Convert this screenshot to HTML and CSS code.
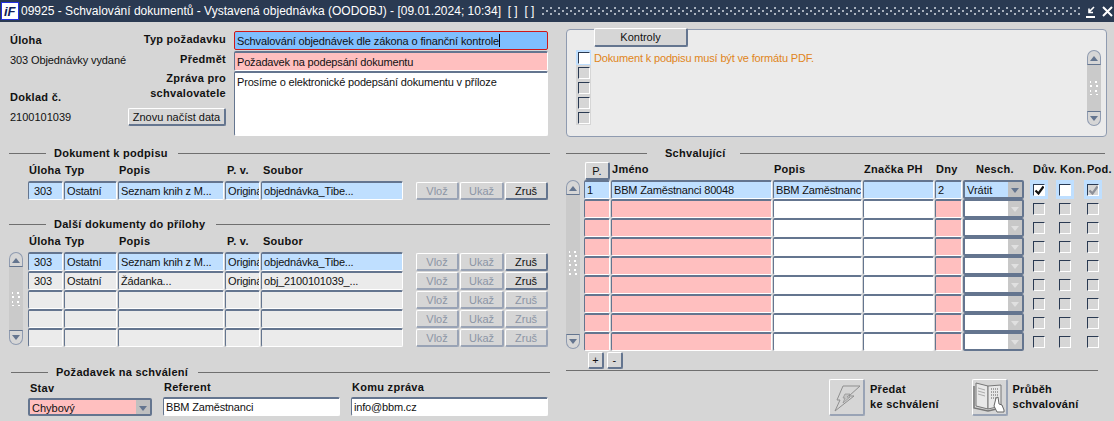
FILE: index.html
```html
<!DOCTYPE html>
<html lang="cs">
<head>
<meta charset="utf-8">
<title>Schvalování dokumentů</title>
<link rel="stylesheet" href="styles.css">
</head>
<body>
<header class="titlebar">
  <svg class="logo" width="18" height="18" viewBox="0 0 18 18"><rect x="0.5" y="0.5" width="17" height="17" fill="#fff" stroke="#2430e0"/><text class="logo-text" x="3" y="14">iF</text></svg>
  <span class="title-text">09925 - Schvalování dokumentů - Vystavená objednávka (OODOBJ) - [09.01.2024; 10:34]&nbsp; [ ]&nbsp; [ ]</span>
  <span class="dots"></span>
  <svg class="winbtn" width="27" height="18" viewBox="0 0 27 18"><path d="M0 15h9" stroke="#fff" stroke-width="2"/><path d="M8 5l-5 5M3 6.500v4h4" stroke="#fff" stroke-width="1.600" fill="none"/><path d="M17 5l9 9M26 5l-9 9" stroke="#fff" stroke-width="2"/></svg>
</header>
<main class="window">
  <section class="left">
    <div class="head">
      <div class="info">
        <div class="b info-task">Úloha</div>
        <div class="info-val">303 Objednávky vydané</div>
        <div class="b info-doc">Doklad č.</div>
        <div class="info-val2">2100101039</div>
      </div>
      <div class="labels">
        <div class="b lab">Typ požadavku</div>
        <div class="b lab">Předmět</div>
        <div class="b lab lab2">Zpráva pro<br>schvalovatele</div>
        <button class="btn reload">Znovu načíst data</button>
      </div>
      <div class="fields">
        <div class="f focus">Schvalování objednávek dle zákona o finanční kontrole<i class="caret"></i></div>
        <div class="f pink">Požadavek na podepsání dokumentu</div>
        <div class="f white area">Prosíme o elektronické podepsání dokumentu v příloze</div>
      </div>
    </div>

    <div class="sect s1"><i class="rule first"></i><span class="b">Dokument k podpisu</span><i class="rule"></i></div>
    <div class="cols"><span class="b">Úloha</span><span class="b">Typ</span><span class="b">Popis</span><span class="b">P. v.</span><span class="b">Soubor</span></div>
    <div class="docrow">
      <div class="f blue c">303</div><div class="f blue">Ostatní</div><div class="f blue">Seznam knih z M...</div><div class="f blue">Originál</div><div class="f blue">objednávka_Tibe...</div>
      <div class="acts"><button class="btn off">Vlož</button><button class="btn off">Ukaž</button><button class="btn">Zruš</button></div>
    </div>

    <div class="sect s2"><i class="rule first"></i><span class="b">Další dokumenty do přílohy</span><i class="rule"></i></div>
    <div class="cols"><span class="b">Úloha</span><span class="b">Typ</span><span class="b">Popis</span><span class="b">P. v.</span><span class="b">Soubor</span></div>
    <div class="tablewrap">
      <div class="scroll short"><b class="up"></b><b class="track"><i class="grip"></i></b><b class="down"></b></div>
      <div class="rows">
        <div class="docrow">
          <div class="f blue c">303</div><div class="f blue">Ostatní</div><div class="f blue">Seznam knih z M...</div><div class="f blue">Originál</div><div class="f blue">objednávka_Tibe...</div>
          <div class="acts"><button class="btn off">Vlož</button><button class="btn off">Ukaž</button><button class="btn">Zruš</button></div>
        </div>
        <div class="docrow">
          <div class="f grey c">303</div><div class="f grey">Ostatní</div><div class="f grey">Žádanka...</div><div class="f grey">Originál</div><div class="f grey">obj_2100101039_...</div>
          <div class="acts"><button class="btn off">Vlož</button><button class="btn off">Ukaž</button><button class="btn">Zruš</button></div>
        </div>
        <div class="docrow">
          <div class="f grey"></div><div class="f grey"></div><div class="f grey"></div><div class="f grey"></div><div class="f grey"></div>
          <div class="acts"><button class="btn off">Vlož</button><button class="btn off">Ukaž</button><button class="btn off">Zruš</button></div>
        </div>
        <div class="docrow">
          <div class="f grey"></div><div class="f grey"></div><div class="f grey"></div><div class="f grey"></div><div class="f grey"></div>
          <div class="acts"><button class="btn off">Vlož</button><button class="btn off">Ukaž</button><button class="btn off">Zruš</button></div>
        </div>
        <div class="docrow">
          <div class="f grey"></div><div class="f grey"></div><div class="f grey"></div><div class="f grey"></div><div class="f grey"></div>
          <div class="acts"><button class="btn off">Vlož</button><button class="btn off">Ukaž</button><button class="btn off">Zruš</button></div>
        </div>
      </div>
    </div>

    <div class="sect s3"><i class="rule first"></i><span class="b">Požadavek na schválení</span><i class="rule"></i></div>
    <div class="request">
      <div class="rq-col stav"><span class="b">Stav</span><div class="sel pink"><span>Chybový</span><b class="arrow"></b></div></div>
      <div class="rq-col ref"><span class="b">Referent</span><div class="f white">BBM Zaměstnanci</div></div>
      <div class="rq-col mail"><span class="b">Komu zpráva</span><div class="f white">info@bbm.cz</div></div>
    </div>
  </section>

  <section class="right">
    <div class="panel">
      <button class="tab">Kontroly</button>
      <div class="checks">
        <div class="chk-cell active"><i class="chk on"></i></div>
        <div class="chk-cell"><i class="chk"></i></div>
        <div class="chk-cell"><i class="chk"></i></div>
        <div class="chk-cell"><i class="chk"></i></div>
        <div class="chk-cell"><i class="chk"></i></div>
      </div>
      <div class="warn">Dokument k podpisu musí být ve formátu PDF.</div>
      <div class="scroll pscroll"><b class="up"></b><b class="track"><i class="grip"></i></b><b class="down"></b></div>
    </div>

    <div class="sect r1"><i class="rule rfirst"></i><span class="b">Schvalující</span><i class="rule"></i></div>
    <div class="apphead">
      <button class="btn pbtn b">P.</button>
      <span class="b">Jméno</span><span class="b">Popis</span><span class="b">Značka PH</span><span class="b">Dny</span><span class="b nes">Nesch.</span><span class="b">Dův.</span><span class="b">Kon.</span><span class="b">Pod.</span>
    </div>
    <div class="tablewrap apptable">
      <div class="scroll tall"><b class="up"></b><b class="track"><i class="grip long"></i></b><b class="down"></b></div>
      <div class="rows">
        <div class="approw">
          <div class="f blue">1</div><div class="f blue">BBM Zaměstnanci 80048</div><div class="f blue">BBM Zaměstnanc</div><div class="f blue"></div><div class="f blue">2</div>
          <div class="sel blue"><span>Vrátit</span><b class="arrow"></b></div>
          <div class="chk-cell active"><i class="chk checked"><svg width="11" height="11" viewBox="0 0 11 11"><path d="M1.500 5.500l3 3 5-7" stroke="#111" stroke-width="2.200" fill="none"/></svg></i></div>
          <div class="chk-cell active"><i class="chk on"></i></div>
          <div class="chk-cell active"><i class="chk"><svg width="11" height="11" viewBox="0 0 11 11"><path d="M1.500 5.500l3 3 5-7" stroke="#8d9098" stroke-width="2.200" fill="none"/></svg></i></div>
        </div>
        <div class="approw"><div class="f pink"></div><div class="f pink"></div><div class="f white"></div><div class="f white"></div><div class="f pink"></div><div class="sel white"><span></span><b class="arrow dim"></b></div><div class="chk-cell"><i class="chk"></i></div><div class="chk-cell"><i class="chk"></i></div><div class="chk-cell"><i class="chk"></i></div></div>
        <div class="approw"><div class="f pink"></div><div class="f pink"></div><div class="f white"></div><div class="f white"></div><div class="f pink"></div><div class="sel white"><span></span><b class="arrow dim"></b></div><div class="chk-cell"><i class="chk"></i></div><div class="chk-cell"><i class="chk"></i></div><div class="chk-cell"><i class="chk"></i></div></div>
        <div class="approw"><div class="f pink"></div><div class="f pink"></div><div class="f white"></div><div class="f white"></div><div class="f pink"></div><div class="sel white"><span></span><b class="arrow dim"></b></div><div class="chk-cell"><i class="chk"></i></div><div class="chk-cell"><i class="chk"></i></div><div class="chk-cell"><i class="chk"></i></div></div>
        <div class="approw"><div class="f pink"></div><div class="f pink"></div><div class="f white"></div><div class="f white"></div><div class="f pink"></div><div class="sel white"><span></span><b class="arrow dim"></b></div><div class="chk-cell"><i class="chk"></i></div><div class="chk-cell"><i class="chk"></i></div><div class="chk-cell"><i class="chk"></i></div></div>
        <div class="approw"><div class="f pink"></div><div class="f pink"></div><div class="f white"></div><div class="f white"></div><div class="f pink"></div><div class="sel white"><span></span><b class="arrow dim"></b></div><div class="chk-cell"><i class="chk"></i></div><div class="chk-cell"><i class="chk"></i></div><div class="chk-cell"><i class="chk"></i></div></div>
        <div class="approw"><div class="f pink"></div><div class="f pink"></div><div class="f white"></div><div class="f white"></div><div class="f pink"></div><div class="sel white"><span></span><b class="arrow dim"></b></div><div class="chk-cell"><i class="chk"></i></div><div class="chk-cell"><i class="chk"></i></div><div class="chk-cell"><i class="chk"></i></div></div>
        <div class="approw"><div class="f pink"></div><div class="f pink"></div><div class="f white"></div><div class="f white"></div><div class="f pink"></div><div class="sel white"><span></span><b class="arrow dim"></b></div><div class="chk-cell"><i class="chk"></i></div><div class="chk-cell"><i class="chk"></i></div><div class="chk-cell"><i class="chk"></i></div></div>
        <div class="approw"><div class="f pink"></div><div class="f pink"></div><div class="f white"></div><div class="f white"></div><div class="f pink"></div><div class="sel white"><span></span><b class="arrow dim"></b></div><div class="chk-cell"><i class="chk"></i></div><div class="chk-cell"><i class="chk"></i></div><div class="chk-cell"><i class="chk"></i></div></div>
      </div>
    </div>
    <div class="plusminus"><button class="btn pm b">+</button><button class="btn pm b">-</button></div>
    <i class="rule bottomrule"></i>
    <div class="actions">
      <button class="iconbtn"><svg width="33" height="34" viewBox="0 0 33 34"><path d="M13 6h17L19 16h5L5 31l5-11H7z" fill="none" stroke="#8f8f8f"/><path d="M15 14h5l-3 3h3l-7 6 2-5h-2z" fill="#c4c4c4" stroke="#8f8f8f" stroke-width=".7"/></svg></button>
      <div class="b actlabel">Předat<br>ke schválení</div>
      <button class="iconbtn"><svg width="33" height="34" viewBox="0 0 33 34"><path d="M3 3l12 3v23L3 26z" fill="#e8e8e8" stroke="#777"/><path d="M15 6l13-1v21l-13 3z" fill="#e8e8e8" stroke="#777"/><path d="M1 6v22l14 3 13-3" fill="none" stroke="#777" stroke-width="1.500"/><path d="M18 9h8M18 12h8M18 15h8M18 18h6" stroke="#a0a0a0" stroke-width="2" stroke-dasharray="1 1"/><path d="M5 8l7 2M5 11l7 2M5 14l7 2" stroke="#aaa"/><path d="M23 18l2-1 1 7 3 1 2 5v2h-7l-3-6z" fill="#fff" stroke="#666"/></svg></button>
      <div class="b actlabel">Průběh<br>schvalování</div>
    </div>
  </section>
</main>
</body>
</html>
```
FILE: styles.css
```css
* { box-sizing: border-box; }
html, body { margin: 0; height: 100%; }
body {
  width: 1114px;
  height: 421px;
  overflow: hidden;
  background: #d6d6d6;
  color: #111;
  font: 11px/14px "Liberation Sans", Arial, sans-serif;
}
i, b { display: block; font-style: normal; }
span.b, .b { font-weight: 700; letter-spacing: .28px; }

.titlebar {
  height: 22px;
  display: flex;
  align-items: center;
  background: #2a3a52;
  color: #fff;
  padding-left: 1px;
  font-size: 12px;
}
.logo { flex: none; margin-right: 2px; }
.logo-text { font: italic 700 13px "Liberation Sans", sans-serif; fill: #10205a; }
.title-text { white-space: nowrap; letter-spacing: .01px; }
.dots {
  flex: 1;
  height: 10px;
  margin: 0 4px 0 8px;
  background-image:
    radial-gradient(circle at 1px 1px, #aeb6c2 .7px, transparent .9px),
    radial-gradient(circle at 1px 1px, #aeb6c2 .7px, transparent .9px);
  background-size: 8px 6px, 8px 6px;
  background-position: 0 1px, 4px 4px;
}
.winbtn { flex: none; margin-right: 1px; }

.window { display: grid; grid-template-columns: 557px 557px; }

.left { padding: 9px 0 0 9px; }
.right { padding: 5px 0 0 9px; }

/* top form */
.head { display: flex; height: 110px; }
.info { width: 119px; padding-left: 1px; white-space: nowrap; }
.info-task { margin-top: 2px; }
.info-val { margin-top: 6px; letter-spacing: -.1px; }
.info-doc { margin-top: 23px; }
.info-val2 { margin-top: 6px; }
.labels { width: 98px; display: flex; flex-direction: column; align-items: flex-end; }
.lab { text-align: right; height: 20px; padding-top: 1px; }
.lab2 { height: 37px; line-height: 15px; margin-top: 0; padding-top: 0; }
.reload { width: 98px; height: 18px; }
.fields { width: 314px; margin-left: 8px; display: flex; flex-direction: column; }
.fields .f { width: 314px; height: 20px; }
.fields .area { height: 65px; padding-top: 2px; align-items: flex-start; }

/* fields */
.f {
  height: 19px;
  min-width: 0;
  display: flex;
  align-items: center;
  padding: 0 1px 0 2px;
  overflow: hidden;
  white-space: nowrap;
  letter-spacing: -.17px;
  border-style: solid;
  border-width: 2px 1px 1px;
  border-color: #64758f #fff #fff #64758f;
  border-radius: 2px;
  background: #fff;
}
.c { padding-left: 5px; }
.blue { background: #bfdfff; }
.grey { background: #ebebeb; }
.pink { background: #ffbfbf; }
.white { background: #fff; }
.fields .focus { border: 1px solid #d01818; background: #7fbfff; height: 19px; margin-bottom: 1px; letter-spacing: -.12px; }
.caret { width: 1px; height: 13px; background: #000; flex: none; }

/* buttons */
.btn, .tab, .iconbtn {
  font: inherit;
  color: #111;
  background: #d6d6d6;
  padding: 0;
  border-style: solid;
  border-width: 1px 2px 2px 1px;
  border-color: #fff #64758f #64758f #fff;
  border-radius: 2px;
}
.btn.off { color: #8c95a5; border-color: #fff #99a3b5 #99a3b5 #fff; }

/* sections */
.sect { display: flex; align-items: center; height: 14px; }
.rule { flex: 1; height: 1px; background: #6f6f6f; }
.rule.first { flex: none; width: 37px; margin-right: 8px; }
.sect .b + .rule { margin-left: 10px; margin-right: 7px; }
.s1 { margin-top: 5px; }
.s2 { margin-top: 17px; }
.s3 { margin-top: 18px; padding-left: 2px; }

.cols {
  display: grid;
  grid-template-columns: 36px 54px 108px 36px 100px;
  padding-left: 20px;
  height: 14px;
  margin-top: 3px;
}
.docrow {
  display: grid;
  grid-template-columns: 35px 53px 106px 35px 142px 145px;
  column-gap: 1px;
  height: 19px;
  margin-left: 19px;
  width: 522px;
}
.cols + .docrow { margin-top: 4px; }
.acts { display: grid; grid-template-columns: 43px 44px 43px; column-gap: 1px; padding: 1px 0 0 12px; height: 19px; }
.acts .btn { height: 18px; }
.rows { flex: none; }
.tablewrap { display: flex; margin-top: 4px; }
.tablewrap .docrow { margin-left: 5px; }

/* scrollbars */
.scroll { width: 14px; display: flex; flex-direction: column; flex: none; }
.scroll .up, .scroll .down {
  height: 15px;
  background: #d6d6d6;
  border: 1px solid #8f9bb0;
  position: relative;
}
.scroll .up { border-radius: 7px 7px 0 0; border-bottom-color: #64758f; }
.scroll .down { border-radius: 0 0 7px 7px; border-top-color: #64758f; }
.scroll .up::after, .scroll .down::after {
  content: "";
  position: absolute;
  left: 2px;
  width: 0;
  height: 0;
  border-left: 4px solid transparent;
  border-right: 4px solid transparent;
}
.scroll .up::after { top: 5px; border-bottom: 5px solid #64758f; }
.scroll .down::after { top: 4px; border-top: 5px solid #64758f; }
.scroll .track { flex: 1; background: #cacaca; display: flex; align-items: center; justify-content: center; }
.grip {
  width: 8px;
  height: 14px;
  background-image:
    radial-gradient(circle at 1px 1px, #fff .8px, transparent 1px),
    radial-gradient(circle at 1px 1px, #fff .8px, transparent 1px);
  background-size: 6px 9px, 6px 9px;
  background-position: 0 4px, 5px 0;
}
.grip.long { height: 27px; }
.short { height: 93px; }
.tall { height: 169px; }

/* request */
.request { display: flex; margin-top: 1px; padding-left: 19px; }
.rq-col { display: flex; flex-direction: column; }
.rq-col .b { height: 13px; padding-left: 1px; }
.rq-col .f { margin-top: 4px; height: 19px; }
.stav { width: 135px; }
.stav .b { padding-left: 2px; margin-top: 1px; }
.ref { width: 188px; }
.ref .f { width: 177px; }
.mail { width: 197px; }
.rq-col .sel { margin-top: 4px; width: 124px; height: 18px; }

.sel {
  height: 19px;
  display: flex;
  justify-content: space-between;
  border: 2px solid #64758f;
  border-radius: 2px;
  overflow: hidden;
}
.sel span { padding: 1px 0 0 2px; line-height: 15px; }
.sel .arrow { width: 14px; background: #c0c0c0; position: relative; }
.sel .arrow::after {
  content: "";
  position: absolute;
  left: 3px;
  top: 6px;
  border-left: 4px solid transparent;
  border-right: 4px solid transparent;
  border-top: 5px solid #64758f;
}
.sel .arrow.dim { background: #c8c8c8; }
.sel .arrow.dim::after { border-top-color: #e0e0e0; }

/* right */
.panel {
  position: relative;
  width: 541px;
  height: 108px;
  margin-top: 2px;
  padding: 20px 5px 0 9px;
  background: #ebebeb;
  border: 1px solid #8f9bb0;
  border-radius: 4px;
  display: flex;
}
.tab {
  position: absolute;
  left: 27px;
  top: -2px;
  width: 94px;
  height: 19px;
}
.checks { width: 15px; flex: none; margin-right: 1px; background: #d6d6d6; height: 75px; }
.chk-cell { height: 15px; display: flex; align-items: center; justify-content: center; }
.chk-cell.active { background: #bfdfff; }
.chk {
  display: block;
  width: 12px;
  height: 12px;
  background: #d6d6d6;
  border-style: solid;
  border-width: 1px;
  border-color: #2a3a52 #fff #fff #2a3a52;
  overflow: hidden;
}
.chk.on, .chk.checked { background: #fff; }
.chk svg { display: block; }
.warn { color: #e0851a; flex: 1; padding-left: 2px; margin-top: 1px; letter-spacing: -.16px; }
.pscroll { height: 76px; }

.r1 { margin-top: 9px; }
.rule.rfirst { flex: none; width: 81px; margin-right: 18px; }
.r1 .rule:last-child { margin-right: 9px; }
.r1 .b + .rule { margin-left: 14px; }

.apphead {
  display: grid;
  grid-template-columns: 27px 162px 90px 72px 40px 57px 27px 27px 30px;
  padding-left: 19px;
  height: 18px;
  margin-top: 2px;
  align-items: start;
}
.pbtn { width: 25px; height: 18px; }
.apptable { margin-top: 0; }
.approw {
  display: grid;
  grid-template-columns: 26px 161px 89px 71px 27px 61px 27px 27px 27px;
  column-gap: 1px;
  margin-left: 4px;
  height: 19px;
  align-items: stretch;
}
.approw .chk-cell { height: 19px; width: 18px; margin-left: 3px; }
.approw > .chk-cell:nth-child(7) { margin-left: 5px; }

.plusminus { display: flex; gap: 3px; padding: 1px 0 0 22px; height: 19px; }
.pm { width: 16px; height: 17px; }
.bottomrule { flex: none; width: 532px; }
.actions { display: flex; padding: 8px 0 0 263px; align-items: flex-start; }
.iconbtn {
  width: 36px;
  height: 37px;
  border-color: #fff #99a3b5 #99a3b5 #fff;
  display: flex;
  align-items: center;
  justify-content: center;
}
.actlabel { width: 108px; padding: 3px 0 0 5px; line-height: 15px; }
```
